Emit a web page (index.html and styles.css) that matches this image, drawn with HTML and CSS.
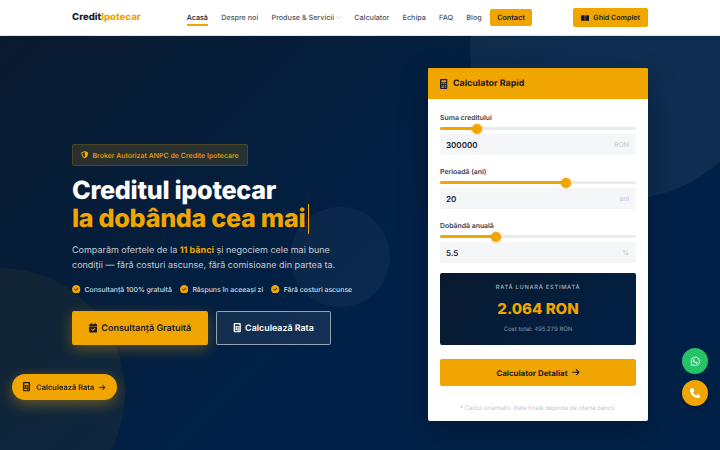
FILE: index.html
```html
<!DOCTYPE html>
<html lang="ro">
<head>
<meta charset="utf-8">
<title>Credit Ipotecar</title>
<link rel="stylesheet" href="styles.css">
</head>
<body>
<svg class="defs" aria-hidden="true">
  <symbol id="i-calc" viewBox="0 0 384 512"><path fill-rule="evenodd" d="M64 0C28.700 0 0 28.700 0 64V448c0 35.300 28.700 64 64 64H320c35.300 0 64-28.700 64-64V64c0-35.300-28.700-64-64-64H64zM96 64H288c17.700 0 32 14.300 32 32v32c0 17.700-14.300 32-32 32H96c-17.700 0-32-14.300-32-32V96c0-17.700 14.300-32 32-32zM64 224a32 32 0 1 1 64 0 32 32 0 1 1-64 0zm32 64a32 32 0 1 1 0 64 32 32 0 1 1 0-64zM64 416c0-17.700 14.300-32 32-32h96c17.700 0 32 14.300 32 32s-14.300 32-32 32H96c-17.700 0-32-14.300-32-32zM192 192a32 32 0 1 1 0 64 32 32 0 1 1 0-64zm-32 128a32 32 0 1 1 64 0 32 32 0 1 1-64 0zm128-128a32 32 0 1 1 0 64 32 32 0 1 1 0-64zm-32 128a32 32 0 1 1 64 0 32 32 0 1 1-64 0zm32 64a32 32 0 1 1 0 64 32 32 0 1 1 0-64z"/></symbol>
  <symbol id="i-arrow" viewBox="0 0 448 512"><path d="M438.600 278.600c12.500-12.500 12.500-32.800 0-45.300l-160-160c-12.500-12.500-32.800-12.500-45.300 0s-12.500 32.800 0 45.300L338.800 224 32 224c-17.700 0-32 14.300-32 32s14.300 32 32 32l306.700 0L233.400 393.400c-12.500 12.500-12.500 32.800 0 45.300s32.800 12.500 45.300 0l160-160z"/></symbol>
  <symbol id="i-check" viewBox="0 0 512 512"><path d="M256 512A256 256 0 1 0 256 0a256 256 0 1 0 0 512zM369 209L241 337c-9.400 9.400-24.600 9.400-33.900 0l-64-64c-9.400-9.400-9.400-24.600 0-33.900s24.600-9.400 33.900 0l47 47L335 175c9.400-9.400 24.600-9.400 33.900 0s9.400 24.600 0 33.900z"/></symbol>
</svg>

<header class="topbar">
  <a class="logo">Credit<span class="logo-accent">Ipotecar</span></a>
  <nav class="nav">
    <a class="nav-link is-active">Acasă</a>
    <a class="nav-link">Despre noi</a>
    <a class="nav-link">Produse &amp; Servicii
      <svg class="chev" viewBox="0 0 10 6"><path d="M1 1l4 4 4-4" fill="none" stroke="currentColor" stroke-width="1"/></svg>
    </a>
    <a class="nav-link">Calculator</a>
    <a class="nav-link">Echipa</a>
    <a class="nav-link">FAQ</a>
    <a class="nav-link nav-last">Blog</a>
    <a class="nav-cta">Contact</a>
  </nav>
  <a class="guide-btn">
    <svg class="guide-ico" viewBox="0 0 24 18"><path d="M0 1.500C3 .3 7.500 0 11.200 1.500V18C7.500 16.700 3 16.700 0 18zM24 1.500C21 .3 16.500 0 12.800 1.500V18c3.700-1.300 8.200-1.300 11.200 0z"/></svg>
    Ghid Complet
  </a>
</header>

<main class="hero">
  <span class="blob blob-a"></span>
  <span class="blob blob-b"></span>
  <span class="blob blob-c"></span>

  <section class="intro">
    <div class="badge">
      <svg class="badge-ico" viewBox="0 0 512 512"><path d="M256 0l-6 1.300L61 82C39 91 23 112 23 137c.5 99 41 280 213 362 12 6 27 6 40 0 172-82 213-263 213-362 0-25-16-46-38-55L262 1.300 256 0zm0 66v379C118 378 87 230 87 137z" fill-rule="evenodd"/></svg>
      Broker Autorizat ANPC de Credite Ipotecare
    </div>
    <h1 class="title">Creditul ipotecar<br><span class="title-accent">la dobânda cea mai</span></h1>
    <p class="lead">Comparăm ofertele de la <strong>11 bănci</strong> și negociem cele mai bune condiții — fără costuri ascunse, fără comisioane din partea ta.</p>
    <ul class="perks">
      <li class="perk"><svg class="perk-ico"><use href="#i-check"/></svg>Consultanță 100% gratuită</li>
      <li class="perk"><svg class="perk-ico"><use href="#i-check"/></svg>Răspuns în aceeași zi</li>
      <li class="perk"><svg class="perk-ico"><use href="#i-check"/></svg>Fără costuri ascunse</li>
    </ul>
    <div class="actions">
      <a class="btn btn-gold">
        <svg class="btn-ico" viewBox="0 0 448 512"><path fill-rule="evenodd" d="M128 0c17.700 0 32 14.300 32 32V64H288V32c0-17.700 14.300-32 32-32s32 14.300 32 32V64h48c26.500 0 48 21.500 48 48v48H0V112C0 85.500 21.500 64 48 64H96V32c0-17.700 14.300-32 32-32zM0 192H448V464c0 26.500-21.500 48-48 48H48c-26.500 0-48-21.500-48-48zM329 305c9.400-9.400 9.400-24.600 0-33.900s-24.600-9.400-33.900 0l-95 95-47-47c-9.400-9.400-24.600-9.400-33.900 0s-9.400 24.600 0 33.900l64 64c9.400 9.400 24.600 9.400 33.900 0z"/></svg>
        Consultanță Gratuită
      </a>
      <a class="btn btn-ghost">
        <svg class="btn-ico btn-ico-calc"><use href="#i-calc"/></svg>
        Calculează Rata
      </a>
    </div>
  </section>

  <aside class="card">
    <h2 class="card-head"><svg class="head-ico"><use href="#i-calc"/></svg>Calculator Rapid</h2>
    <div class="card-body">
      <div class="field">
        <label class="field-label">Suma creditului</label>
        <div class="slider"><span class="slider-fill" style="width:37px"></span></div>
        <div class="input"><span class="input-val">300000</span><span class="input-unit">RON</span></div>
      </div>
      <div class="field">
        <label class="field-label">Perioadă (ani)</label>
        <div class="slider"><span class="slider-fill" style="width:126px"></span></div>
        <div class="input"><span class="input-val">20</span><span class="input-unit">ani</span></div>
      </div>
      <div class="field">
        <label class="field-label">Dobândă anuală</label>
        <div class="slider"><span class="slider-fill" style="width:56px"></span></div>
        <div class="input"><span class="input-val">5.5</span><span class="input-unit">%</span></div>
      </div>
      <div class="result">
        <div class="result-label">RATĂ LUNARĂ ESTIMATĂ</div>
        <div class="result-value">2.064 RON</div>
        <div class="result-total">Cost total: 495.279 RON</div>
      </div>
      <a class="detail-btn">Calculator Detaliat <svg class="detail-arrow"><use href="#i-arrow"/></svg></a>
      <p class="note">* Calcul orientativ. Rata finală depinde de oferta băncii.</p>
    </div>
  </aside>
</main>

<a class="float-pill">
  <svg class="pill-ico"><use href="#i-calc"/></svg>
  Calculează Rata
  <svg class="pill-arrow"><use href="#i-arrow"/></svg>
</a>
<div class="float-stack">
  <a class="round round-green"><svg class="round-ico" viewBox="0 0 448 512"><path d="M380.900 97.100C339 55.100 283.200 32 223.900 32c-122.400 0-222 99.600-222 222 0 39.100 10.200 77.300 29.600 111L0 480l117.700-30.900c32.400 17.700 68.900 27 106.100 27h.1c122.300 0 224.100-99.600 224.100-222 0-59.300-25.200-115-67.100-157zm-157 341.600c-33.200 0-65.700-8.900-94-25.700l-6.700-4-69.800 18.300L72 359.200l-4.400-7c-18.500-29.400-28.200-63.300-28.200-98.200 0-101.700 82.800-184.500 184.600-184.500 49.300 0 95.600 19.200 130.400 54.100 34.800 34.900 56.200 81.200 56.100 130.500 0 101.800-84.900 184.600-186.600 184.600zm101.200-138.200c-5.500-2.800-32.800-16.200-37.900-18-5.100-1.900-8.800-2.800-12.500 2.800-3.700 5.600-14.300 18-17.600 21.800-3.200 3.700-6.500 4.200-12 1.400-32.600-16.300-54-29.100-75.500-66-5.700-9.800 5.700-9.100 16.300-30.300 1.800-3.700.9-6.900-.5-9.700-1.400-2.800-12.500-30.100-17.100-41.200-4.500-10.800-9.100-9.300-12.500-9.500-3.200-.2-6.900-.2-10.600-.2-3.700 0-9.700 1.400-14.800 6.900-5.100 5.600-19.400 19-19.400 46.300 0 27.300 19.900 53.700 22.600 57.400 2.800 3.700 39.100 59.700 94.800 83.800 35.200 15.200 49 16.500 66.600 13.900 10.700-1.600 32.800-13.400 37.400-26.400 4.600-13 4.600-24.100 3.200-26.400-1.300-2.500-5-3.900-10.500-6.600z"/></svg></a>
  <a class="round round-gold"><svg class="round-ico" viewBox="0 0 512 512"><path d="M164.900 24.600c-7.700-18.600-28-28.500-47.400-23.200l-88 24C12.100 30.200 0 46 0 64C0 311.400 200.600 512 448 512c18 0 33.800-12.100 38.600-29.500l24-88c5.300-19.400-4.600-39.700-23.200-47.400l-96-40c-16.300-6.800-35.200-2.100-46.300 11.600L304.700 368C234.300 334.700 177.300 277.700 144 207.300L193.300 167c13.700-11.200 18.400-30 11.600-46.300l-40-96z"/></svg></a>
</div>
</body>
</html>
```
FILE: styles.css
```css
* { box-sizing: border-box; }
html, body { margin: 0; height: 100%; overflow: hidden; }
body {
  font-family: Inter, "Noto Sans", sans-serif;
  text-rendering: geometricPrecision;
  background: #002147;
  color: #1a1a2e;
  display: flex;
  flex-direction: column;
}
a { text-decoration: none; color: inherit; }
.defs { display: none; }

.topbar {
  flex: none;
  height: 36px;
  padding: 0 72px;
  background: #fff;
  border-bottom: 1px solid #e5e7eb;
  display: flex;
  align-items: center;
  justify-content: space-between;
}
.logo { width: 74px; font-size: 9.600px; font-weight: 800; color: #1a1a2e; white-space: nowrap; }
.logo-accent { color: #f0a500; }
.nav { display: flex; align-items: center; gap: 13.300px; }
.nav-link { position: relative; font-size: 7.200px; font-weight: 500; color: #4b5563; white-space: nowrap; padding: 3px 0; display: flex; align-items: center; gap: 2px; }
.nav-link.is-active { color: #1a1a2e; }
.nav-link.is-active::after { content: ""; position: absolute; left: 0; right: 0; bottom: -.500px; height: 1.200px; background: #f0a500; }
.chev { width: 5px; height: 3px; color: #9ca3af; }
.nav-last { margin-right: -5.300px; }
.nav-cta { font-size: 7.200px; font-weight: 600; color: #1a1a2e; background: #f0a500; border-radius: 2px; padding: 0 7.500px; height: 17px; line-height: 17px; }
.guide-btn { display: flex; align-items: center; gap: 4.500px; background: #f0a500; color: #1a1a2e; border-radius: 2px; height: 19px; padding: 0 8px; font-size: 7.100px; font-weight: 600; white-space: nowrap; }
.guide-ico { width: 8px; height: 6px; fill: #1a1a2e; }

.hero {
  position: relative;
  flex: 1;
  min-height: 0;
  overflow: hidden;
  padding: 32px 72px 29px;
  display: flex;
  justify-content: space-between;
  align-items: center;
  background: linear-gradient(135deg, #0a1a2e 0%, #002147 55%, #002147 100%);
}
.blob { position: absolute; border-radius: 50%; pointer-events: none; }
.blob-a { left: 470px; top: -136px; width: 300px; height: 300px; background: rgba(255,255,255,.055); }
.blob-b { left: -125px; top: 232px; width: 250px; height: 250px; background: rgba(240,165,0,.055); }
.blob-c { left: 290px; top: 171px; width: 100px; height: 100px; background: rgba(255,255,255,.04); }

.intro { position: relative; width: 290px; }
.badge { display: inline-flex; align-items: center; gap: 4px; height: 22px; padding: 0 8px; font-size: 7px; font-weight: 500; color: #f0a500; background: rgba(240,165,0,.15); border: 1px solid rgba(240,165,0,.18); border-radius: 2px; white-space: nowrap; vertical-align: top; }
.badge-ico { width: 7.500px; height: 7.500px; fill: #f0a500; }
.title { margin: 11px 0 9.500px; font-size: 25.200px; line-height: 28px; font-weight: 800; color: #fff; letter-spacing: -0.3px; white-space: nowrap; }
.title-accent { color: #f0a500; border-right: 1.500px solid #f0a500; padding-right: 2.500px; }
.lead { margin: 0 0 10.500px; max-width: 272px; font-size: 9px; line-height: 15.500px; color: rgba(255,255,255,.78); }
.lead strong { color: #f0a500; font-weight: 700; }
.perks { list-style: none; margin: 0 0 17px; padding: 0; display: flex; gap: 8px; height: 10px; }
.perk { display: flex; align-items: center; gap: 4px; font-size: 6.900px; font-weight: 500; color: rgba(255,255,255,.85); white-space: nowrap; }
.perk-ico { width: 8.500px; height: 8.500px; fill: #f0a500; }
.actions { display: flex; gap: 8px; }
.btn { display: flex; align-items: center; justify-content: center; gap: 4px; height: 34px; font-weight: 600; border-radius: 2px; white-space: nowrap; }
.btn-gold { width: 136px; font-size: 9px; background: #f0a500; color: #1a1a2e; box-shadow: 0 4px 14px rgba(240,165,0,.35); }
.btn-ghost { width: 114.500px; font-size: 8.900px; color: #fff; background: rgba(255,255,255,.07); border: 1.500px solid rgba(255,255,255,.55); }
.btn-ico { width: 8.500px; height: 9.500px; fill: #1a1a2e; }
.btn-ico-calc { fill: #fff; }

.card { position: relative; width: 220px; background: #fff; border-radius: 2px; overflow: hidden; box-shadow: 0 10px 30px rgba(0,0,0,.25); }
.card-head { margin: 0; height: 31px; background: #f0a500; color: #1a1a2e; font-size: 8.900px; font-weight: 700; display: flex; align-items: center; gap: 5.500px; padding: 0 12px; }
.head-ico { width: 7.500px; height: 10px; fill: #1a1a2e; }
.card-body { padding: 12px 12px 7px; }
.field { height: 54px; }
.field-label { display: block; font-size: 6.900px; line-height: 13px; margin-bottom: -1px; font-weight: 600; color: #374151; }
.slider { position: relative; height: 3px; margin: 4px 0 4px; background: #e9ecef; border-radius: 2px; }
.slider-fill { position: absolute; left: 0; top: 0; bottom: 0; background: #f0a500; border-radius: 2px; }
.slider-fill::after { content: ""; position: absolute; right: -5px; top: -3.500px; width: 10px; height: 10px; border-radius: 50%; background: #f0a500; box-shadow: 0 0 3px rgba(240,165,0,.6); }
.input { height: 21px; background: #f5f6f8; border-radius: 2px; padding: 0 7px 0 6px; display: flex; align-items: center; justify-content: space-between; }
.input-val { font-size: 8px; font-weight: 600; color: #1a1a2e; }
.input-unit { font-size: 6.900px; color: #c3c7ce; }
.result { height: 72px; border-radius: 2px; display: flex; flex-direction: column; align-items: center; padding-top: 10px; background: linear-gradient(135deg, #0a1a2e, #002147); }
.result-label { font-size: 5.700px; line-height: 9px; font-weight: 500; letter-spacing: .75px; color: rgba(255,255,255,.65); }
.result-value { margin-top: 5.500px; font-size: 15px; line-height: 22px; font-weight: 800; color: #f0a500; }
.result-total { margin-top: 5px; font-size: 6px; line-height: 10px; color: rgba(255,255,255,.5); }
.detail-btn { margin-top: 14px; height: 27px; background: #f0a500; color: #1a1a2e; border-radius: 2px; display: flex; align-items: center; justify-content: center; gap: 4.500px; font-size: 7.900px; font-weight: 700; }
.detail-arrow { width: 7.500px; height: 8.500px; fill: #1a1a2e; }
.note { margin: 18px 0 0; height: 10px; line-height: 10px; text-align: center; font-size: 6px; color: #c3c7ce; white-space: nowrap; }

.float-pill { position: fixed; left: 12px; top: 374px; width: 105px; height: 26px; border-radius: 13px; background: #f0a500; color: #1a1a2e; font-size: 7.500px; font-weight: 600; display: flex; align-items: center; justify-content: center; gap: 4px; box-shadow: 0 4px 14px rgba(240,165,0,.4); white-space: nowrap; }
.pill-ico { width: 7px; height: 9.500px; fill: #1a1a2e; margin-right: 2px; }
.pill-arrow { width: 6.500px; height: 7px; fill: #1a1a2e; margin-left: 1px; }
.float-stack { position: fixed; left: 682px; top: 348px; display: flex; flex-direction: column; gap: 6px; }
.round { width: 26px; height: 26px; border-radius: 50%; display: flex; align-items: center; justify-content: center; }
.round-green { background: #25c267; }
.round-gold { background: #f0a500; box-shadow: 0 2px 6px rgba(0,0,0,.3); }
.round-ico { width: 10.500px; height: 10.500px; fill: #fff; }
```
